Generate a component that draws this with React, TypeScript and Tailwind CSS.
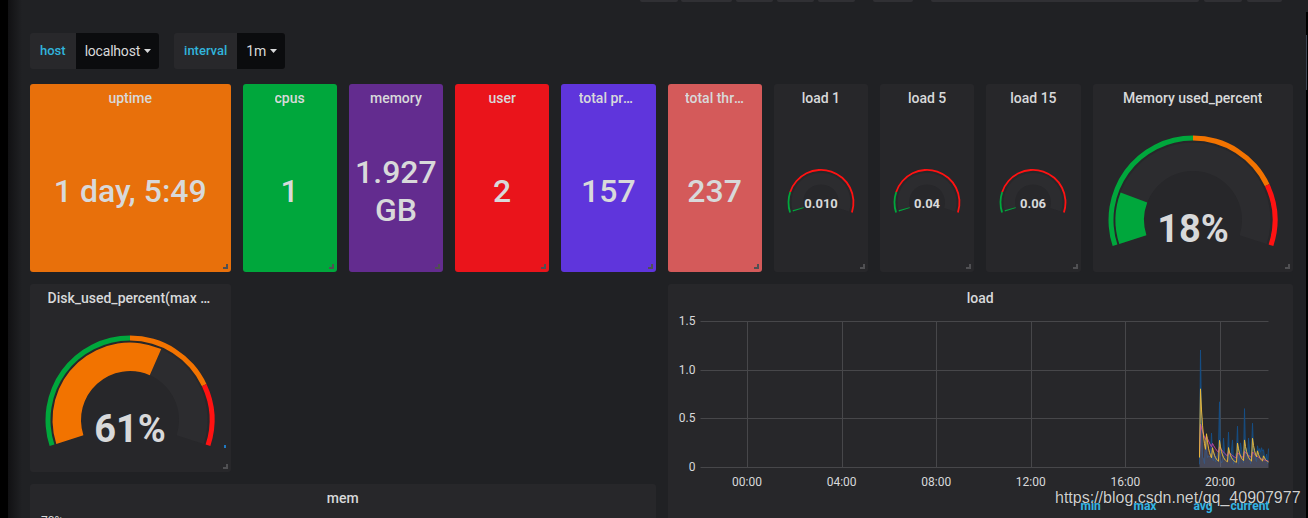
import React from "react";

// gauge geometry: arc opens downwards, 18deg below horizontal on both sides
const SPAN = 216;
const TILT = 18;

function polar(cx: number, cy: number, r: number, f: number): [number, number] {
  const a = ((180 + TILT - f * SPAN) * Math.PI) / 180;
  return [cx + r * Math.cos(a), cy - r * Math.sin(a)];
}

function sector(cx: number, cy: number, ro: number, ri: number, f0: number, f1: number) {
  const [x0, y0] = polar(cx, cy, ro, f0);
  const [x1, y1] = polar(cx, cy, ro, f1);
  const [x2, y2] = polar(cx, cy, ri, f1);
  const [x3, y3] = polar(cx, cy, ri, f0);
  const large = (f1 - f0) * SPAN > 180 ? 1 : 0;
  return `M${x0} ${y0} A${ro} ${ro} 0 ${large} 1 ${x1} ${y1} L${x2} ${y2} A${ri} ${ri} 0 ${large} 0 ${x3} ${y3} Z`;
}

type Band = { from: number; to: number; color: string };

interface GaugeProps {
  width: number;
  cx: number;
  cy: number;
  thOuter: number;
  thInner: number;
  valOuter: number;
  valInner: number;
  bands: Band[];
  value: number;
  valueColor: string;
  label: string;
  fontSize: number;
  labelDy: number;
}

function Gauge(p: GaugeProps) {
  return (
    <svg width={p.width} height={160} className="mx-auto block">
      <path d={sector(p.cx, p.cy, p.valOuter, p.valInner, 0, 1)} fill="#2c2c2f" />
      {p.bands.map((b) => (
        <path key={b.from} d={sector(p.cx, p.cy, p.thOuter, p.thInner, b.from, b.to)} fill={b.color} />
      ))}
      <path d={sector(p.cx, p.cy, p.valOuter, p.valInner, 0, p.value)} fill={p.valueColor} />
      <text
        x={p.cx}
        y={p.cy + p.labelDy}
        textAnchor="middle"
        dominantBaseline="central"
        fill="#d8d9da"
        fontSize={p.fontSize}
        fontWeight={700}
        fontFamily="Roboto, sans-serif"
      >
        {p.label}
      </text>
    </svg>
  );
}

const GREEN = "#00a73c";
const ORANGE = "#f27300";
const RED = "#ff1212";

const bigBands: Band[] = [
  { from: 0, to: 0.5, color: GREEN },
  { from: 0.5, to: 0.8, color: ORANGE },
  { from: 0.8, to: 1, color: RED },
];

const smallBands: Band[] = [
  { from: 0, to: 0.17, color: GREEN },
  { from: 0.17, to: 1, color: RED },
];

function SmallGauge({ label }: { label: string }) {
  return (
    <Gauge
      width={94}
      cx={47}
      cy={90.4}
      thOuter={33.4}
      thInner={31.6}
      valOuter={29.5}
      valInner={18}
      bands={smallBands}
      value={0.012}
      valueColor={GREEN}
      label={label}
      fontSize={13}
      labelDy={1.5}
    />
  );
}

function BigGauge({ value, color, label }: { value: number; color: string; label: string }) {
  return (
    <Gauge
      width={200}
      cx={100}
      cy={108}
      thOuter={84.5}
      thInner={79.5}
      valOuter={77.5}
      valInner={49}
      bands={bigBands}
      value={value}
      valueColor={color}
      label={label}
      fontSize={38}
      labelDy={9}
    />
  );
}

function Panel({
  title,
  className,
  children,
}: {
  title: string;
  className: string;
  children?: React.ReactNode;
}) {
  return (
    <div className={`relative flex flex-col overflow-hidden rounded-[3px] ${className}`}>
      <div className="flex h-[28px] shrink-0 justify-center pt-[5px]">
        <span className="max-w-[calc(100%-35px)] truncate text-[14px] font-medium leading-[18px] text-[#d8d9da]">
          {title}
        </span>
      </div>
      {children}
      <span className="absolute bottom-[3px] right-[3px] h-[5px] w-[5px] border-b-2 border-r-2 border-[#505053]" />
    </div>
  );
}

function Stat({ title, value, className }: { title: string; value: string; className: string }) {
  return (
    <Panel title={title} className={className}>
      <div className="flex flex-1 items-center justify-center px-1 pb-[2px] text-center text-[32px] font-medium leading-[38px] text-[#d8d9da]">
        {value}
      </div>
    </Panel>
  );
}

// ---- load chart data ----
let seed = 11;
const rand = () => {
  seed = (seed * 16807) % 2147483647;
  return seed / 2147483647;
};

const N = 70;
const blueSpikes: Record<number, number> = {
  1: 1.2, 2: 0.45, 6: 0.3, 12: 0.35, 20: 0.67, 24: 0.3, 29: 0.36, 33: 0.28,
  38: 0.42, 41: 0.25, 45: 0.6, 49: 0.3, 53: 0.45, 58: 0.22, 64: 0.18,
};
const blue = Array.from({ length: N }, (_, i) => blueSpikes[i] ?? 0.03 + rand() * 0.17);

function decay(base: number, bumps: [number, number][], tau: number) {
  return Array.from({ length: N }, (_, i) =>
    bumps.reduce((s, [c, h]) => (i >= c ? s + h * Math.exp(-(i - c) / tau) : s), base)
  );
}

const yellow = decay(
  0.04,
  [[0, 0.06], [1, 0.72], [7, 0.2], [13, 0.12], [20, 0.22], [29, 0.15], [38, 0.2], [45, 0.22], [53, 0.24], [58, 0.08], [64, 0.06]],
  3
);
const magenta = decay(
  0.04,
  [[0, 0.08], [1, 0.33], [7, 0.06], [13, 0.05], [20, 0.07], [29, 0.05], [38, 0.06], [45, 0.07], [53, 0.06]],
  10
);

const X0 = 32.5;
const X1 = 600.5;
const Y0 = 155.3;
const K = 97.7;
const DX0 = 531.5;
const yFor = (v: number) => Y0 - v * K;
const crisp = (v: number) => Math.round(v) + 0.5;

function linePath(vals: number[]) {
  return vals.map((v, i) => `${i ? "L" : "M"}${DX0 + i} ${yFor(v)}`).join(" ");
}
function areaPath(vals: number[]) {
  return `${linePath(vals)} L${DX0 + vals.length - 1} ${Y0} L${DX0} ${Y0} Z`;
}

const hours: [string, number][] = [
  ["00:00", 79],
  ["04:00", 173.6],
  ["08:00", 268.2],
  ["12:00", 362.8],
  ["16:00", 457.4],
  ["20:00", 552],
];

function LoadChart() {
  return (
    <svg width={626} height={186} className="block shrink-0">
      {[0, 0.5, 1, 1.5].map((v) => (
        <g key={v}>
          <line x1={X0} x2={X1} y1={crisp(yFor(v))} y2={crisp(yFor(v))} stroke="#47474a" strokeWidth={1} />
          <text
            x={27.5}
            y={yFor(v)}
            textAnchor="end"
            dominantBaseline="central"
            fill="#d8d9da"
            fontSize={12}
            fontFamily="Roboto, sans-serif"
          >
            {v === 0 ? "0" : v.toFixed(1)}
          </text>
        </g>
      ))}
      {hours.map(([h, x]) => (
        <g key={h}>
          <line x1={crisp(x)} x2={crisp(x)} y1={crisp(yFor(1.5))} y2={crisp(Y0)} stroke="#47474a" strokeWidth={1} />
          <text
            x={x}
            y={169.7}
            textAnchor="middle"
            dominantBaseline="central"
            fill="#d8d9da"
            fontSize={12}
            fontFamily="Roboto, sans-serif"
          >
            {h}
          </text>
        </g>
      ))}
      <path d={areaPath(blue)} fill="#1f78c1" fillOpacity={0.28} />
      <path d={linePath(blue)} fill="none" stroke="#154e85" strokeWidth={1} />
      <path d={areaPath(yellow)} fill="#eab839" fillOpacity={0.1} />
      <path d={areaPath(magenta)} fill="#ba43a9" fillOpacity={0.1} />
      <path d={linePath(magenta)} fill="none" stroke="#ba43a9" strokeWidth={1} />
      <path d={linePath(yellow)} fill="none" stroke="#eab839" strokeWidth={1} />
    </svg>
  );
}

function Caret() {
  return (
    <svg width="7" height="4" viewBox="0 0 7 4">
      <path d="M0 0h7L3.5 4z" fill="#d8d9da" />
    </svg>
  );
}

function Variable({ name, value }: { name: string; value: string }) {
  return (
    <div className="flex h-[36px] overflow-hidden rounded-[3px]">
      <div className="flex items-center bg-[#28282b] px-[10px] text-[13px] font-medium text-[#31b4dc]">{name}</div>
      <div className="flex items-center gap-[4px] bg-[#0b0c0e] pl-[9px] pr-[8px] text-[14px] tracking-[-0.2px] text-[#d8d9da]">
        {value}
        <Caret />
      </div>
    </div>
  );
}

export default function App() {
  return (
    <div className="relative flex h-[518px] w-[1308px] overflow-hidden bg-[#202124] font-['Roboto',sans-serif]">
      <div className="w-[8px] shrink-0 bg-black" />

      <div className="relative flex-1 bg-[linear-gradient(to_right,#111113,#202124_14px)] pl-[22px] pr-[13px]">
        {/* bottoms of the nav buttons above */}
        <div className="ml-[610px] flex h-[2px]">
          <div className="w-[38px] rounded-b-[2px] bg-[#303034]" />
          <div className="ml-[3px] w-[51px] rounded-b-[2px] bg-[#303034]" />
          <div className="ml-[4px] w-[37px] rounded-b-[2px] bg-[#303034]" />
          <div className="ml-[4px] w-[37px] rounded-b-[2px] bg-[#303034]" />
          <div className="ml-[4px] w-[37px] rounded-b-[2px] bg-[#303034]" />
          <div className="ml-[18px] w-[40px] rounded-b-[2px] bg-[#303034]" />
          <div className="ml-[18px] w-[268px] rounded-b-[2px] bg-[#303034]" />
          <div className="ml-[5px] w-[38px] rounded-b-[2px] bg-[#303034]" />
          <div className="ml-[5px] w-[35px] rounded-b-[2px] bg-[#303034]" />
        </div>

        <div className="mt-[31px] flex gap-[15px]">
          <Variable name="host" value="localhost" />
          <Variable name="interval" value="1m" />
        </div>

        <div className="mt-[15px] grid grid-cols-12 grid-rows-[188px_188px_188px] gap-[12px]">
          <Stat title="uptime" value="1 day, 5:49" className="col-span-2 bg-[#e8700b]" />
          <Stat title="cpus" value="1" className="bg-[#00a73c]" />
          <Stat title="memory" value="1.927 GB" className="bg-[#632c8f]" />
          <Stat title="user" value="2" className="bg-[#ea141b]" />
          <Stat title="total processes" value="157" className="bg-[#5f35dc]" />
          <Stat title="total threads" value="237" className="bg-[#d45a5a]" />
          <Panel title="load 1" className="bg-[#27272a]">
            <SmallGauge label="0.010" />
          </Panel>
          <Panel title="load 5" className="bg-[#27272a]">
            <SmallGauge label="0.04" />
          </Panel>
          <Panel title="load 15" className="bg-[#27272a]">
            <SmallGauge label="0.06" />
          </Panel>
          <Panel title="Memory used_percent" className="col-span-2 bg-[#27272a]">
            <BigGauge value={0.18} color={GREEN} label="18%" />
          </Panel>

          <Panel title="Disk_used_percent(max percent)" className="col-span-2 col-start-1 row-start-2 bg-[#27272a]">
            <BigGauge value={0.61} color={ORANGE} label="61%" />
            <span className="absolute left-[194px] top-[161px] h-[3px] w-[2px] bg-[#1f78c1]" />
          </Panel>

          <Panel title="load" className="col-span-6 col-start-7 row-span-2 row-start-2 bg-[#27272a]">
            <LoadChart />
            <div className="mt-[1px] flex pl-[413px] text-[12px] font-bold leading-[14px] text-[#33b5e5]">
              <span className="w-[53px]">min</span>
              <span className="w-[60px]">max</span>
              <span className="w-[37px]">avg</span>
              <span>current</span>
            </div>
          </Panel>

          <Panel title="mem" className="col-span-6 col-start-1 row-start-3 bg-[#27272a]">
            <div className="mt-[2px] pl-[11px] text-[12px] leading-[14px] text-[#d8d9da]">70%</div>
          </Panel>
        </div>
      </div>

      <div className="flex w-[2px] shrink-0 flex-col">
        <div className="h-[12px] bg-[#202124]" />
        <div className="flex-1 bg-black">
          <div className="mt-[23px] h-[55px] w-[1px] bg-[#3d4452]" />
        </div>
      </div>

      <div className="pointer-events-none absolute left-[1055px] top-[489px] font-['Liberation_Sans',Arial,sans-serif] text-[16px] leading-[18px] text-[#cfcfcf] [text-shadow:0_0_1px_#000]">
        https://blog.csdn.net/qq_40907977
      </div>
    </div>
  );
}
